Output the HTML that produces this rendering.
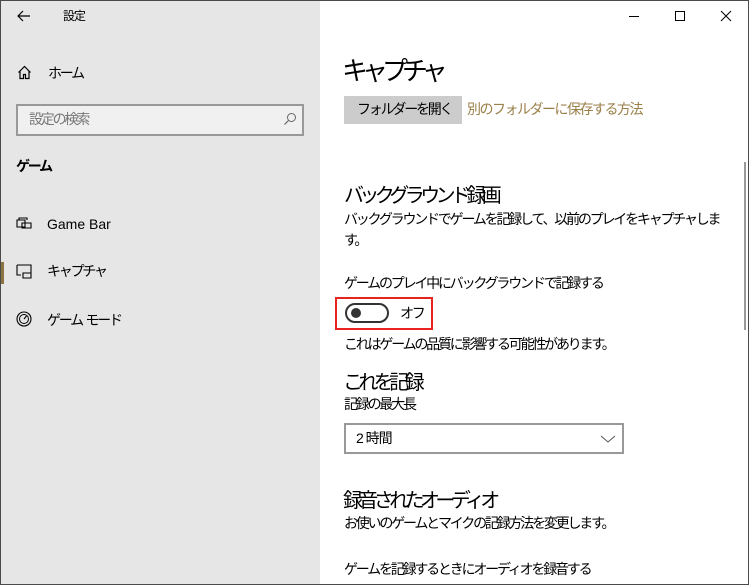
<!DOCTYPE html>
<html><head><meta charset="utf-8"><style>
*{margin:0;padding:0;box-sizing:border-box}
body{width:749px;height:585px;overflow:hidden;font-family:"Liberation Sans","Noto Sans CJK JP",sans-serif;color:#000;background:#fff;position:relative}
.a{position:absolute;white-space:nowrap;line-height:1}
#left{position:absolute;left:0;top:0;width:320px;height:585px;background:#e6e6e6}
.frame{position:absolute;inset:0;border:1px solid #4a4a4a;pointer-events:none}
.f14{font-size:14px;letter-spacing:-2.2px}
.h20{font-size:20px;letter-spacing:-4.6px}
</style></head><body>
<div id="left"></div>
<svg class="a" style="left:16px;top:9px" width="16" height="14" viewBox="0 0 16 14"><path d="M14 7H2M7 2L2 7l5 5" fill="none" stroke="#000" stroke-width="1.2"/></svg>
<div class="a" style="left:63px;top:10px;font-size:12px;letter-spacing:-1px">設定</div>
<svg class="a" style="left:17px;top:65px" width="15" height="15" viewBox="0 0 15 15"><path d="M1.5 7.5L7.5 1.5l6 6M3 6v7.5h3.5V9.5h2v4H12V6" fill="none" stroke="#000" stroke-width="1.2"/></svg>
<div class="a f14" style="left:48px;top:66px">ホーム</div>
<div class="a" style="left:16px;top:104px;width:288px;height:32px;border:2px solid #999;background:#f0f0f0"></div>
<div class="a f14" style="left:29px;top:112px;color:#777">設定の検索</div>
<svg class="a" style="left:283px;top:112px" width="14" height="14" viewBox="0 0 14 14"><circle cx="8.5" cy="5.5" r="4" fill="none" stroke="#666" stroke-width="1"/><path d="M5.5 8.5L1.5 12.5" stroke="#666" stroke-width="1.2"/></svg>
<div class="a f14" style="left:16px;top:159px;font-weight:bold">ゲーム</div>
<svg class="a" style="left:16px;top:216px" width="16" height="14" viewBox="0 0 16 14"><path d="M1 4h8v7H1zM3 4V2h8v2M6 7h9v5H6z" fill="none" stroke="#000" stroke-width="1.1"/></svg>
<div class="a" style="left:47px;top:217px;font-size:14px">Game Bar</div>
<div class="a" style="left:0;top:262px;width:4px;height:22px;background:#8c7442"></div>
<svg class="a" style="left:16px;top:264px" width="16" height="15" viewBox="0 0 16 15"><path d="M1 1h14v9M1 1v10h4M7 9h8v5H7z" fill="none" stroke="#000" stroke-width="1.1"/></svg>
<div class="a f14" style="left:47px;top:264px">キャプチャ</div>
<svg class="a" style="left:16px;top:311px" width="16" height="16" viewBox="0 0 16 16"><circle cx="8" cy="8" r="7" fill="none" stroke="#000" stroke-width="1.1"/><circle cx="8" cy="8" r="4.5" fill="none" stroke="#000" stroke-width="1"/><path d="M8 8l2.5-3" stroke="#000" stroke-width="1.1"/></svg>
<div class="a f14" style="left:47px;top:313px">ゲーム&nbsp;&nbsp;モード</div>

<svg class="a" style="left:626px;top:9px" width="110" height="14" viewBox="0 0 110 14"><path d="M3 7.5h10" stroke="#000"/><rect x="49.5" y="2.5" width="9" height="9" fill="none" stroke="#000"/><path d="M95 2l10 10M105 2L95 12" stroke="#000"/></svg>

<div class="a" style="left:342px;top:58px;font-size:26px;letter-spacing:-6px">キャプチャ</div>
<div class="a" style="left:344px;top:96px;width:118px;height:28px;background:#ccc"></div>
<div class="a f14" style="left:357px;top:102px">フォルダーを開く</div>
<div class="a f14" style="left:467px;top:102px;color:#9a7f48;letter-spacing:-1.5px">別のフォルダーに保存する方法</div>
<div class="a h20" style="left:344px;top:186px">バックグラウンド録画</div>
<div class="a f14" style="left:344px;top:212px">バックグラウンドでゲームを記録して、以前のプレイをキャプチャしま</div>
<div class="a f14" style="left:344px;top:233px">す。</div>
<div class="a f14" style="left:344px;top:276px">ゲームのプレイ中にバックグラウンドで記録する</div>
<div class="a" style="left:335px;top:297px;width:98px;height:33px;border:2px solid #e8231f"></div>
<div class="a" style="left:345px;top:303px;width:44px;height:20px;border:2px solid #333;border-radius:10px"></div>
<div class="a" style="left:351px;top:308px;width:10px;height:10px;border-radius:50%;background:#333"></div>
<div class="a f14" style="left:400px;top:306px">オフ</div>
<div class="a f14" style="left:344px;top:337px">これはゲームの品質に影響する可能性があります。</div>
<div class="a h20" style="left:343px;top:373px">これを記録</div>
<div class="a f14" style="left:344px;top:397px">記録の最大長</div>
<div class="a" style="left:344px;top:423px;width:280px;height:31px;border:2px solid #999"></div>
<div class="a f14" style="left:356px;top:431px;letter-spacing:-1px">2 時間</div>
<svg class="a" style="left:600px;top:434px" width="16" height="10" viewBox="0 0 16 10"><path d="M1 2l7 6 7-6" fill="none" stroke="#555" stroke-width="1"/></svg>
<div class="a h20" style="left:343px;top:491px">録音されたオーディオ</div>
<div class="a f14" style="left:344px;top:516px">お使いのゲームとマイクの記録方法を変更します。</div>
<div class="a f14" style="left:344px;top:562px">ゲームを記録するときにオーディオを録音する</div>
<div class="a" style="left:744px;top:162px;width:2px;height:168px;background:#999"></div>
<div class="frame"></div>
</body></html>
